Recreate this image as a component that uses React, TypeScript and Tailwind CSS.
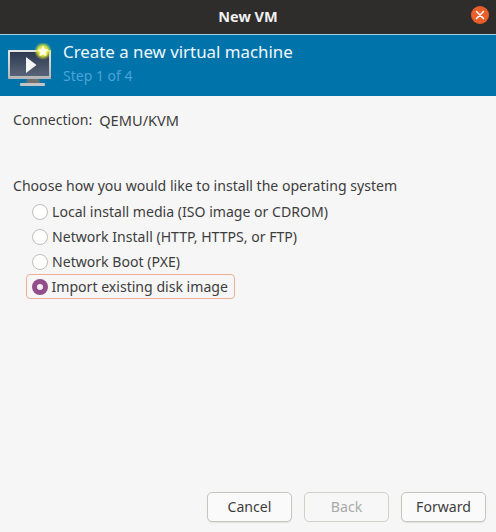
import React from "react";

function VmIcon() {
  return (
    <svg width="46" height="46" viewBox="0 0 46 46" className="shrink-0">
      <defs>
        <radialGradient id="glow">
          <stop offset="0" stopColor="#fffbb0" />
          <stop offset="0.55" stopColor="#e6ea3c" stopOpacity="0.95" />
          <stop offset="1" stopColor="#c8d830" stopOpacity="0" />
        </radialGradient>
        <linearGradient id="scr" x1="0" y1="0" x2="0" y2="1">
          <stop offset="0" stopColor="#2d3a50" />
          <stop offset="1" stopColor="#5a6478" />
        </linearGradient>
        <linearGradient id="frame" x1="0" y1="0" x2="0" y2="1">
          <stop offset="0" stopColor="#e8e8e8" />
          <stop offset="1" stopColor="#b4b4b4" />
        </linearGradient>
      </defs>
      <rect x="1" y="7" width="43" height="29" rx="1" fill="url(#frame)" />
      <rect x="3" y="9" width="39" height="24" fill="url(#scr)" />
      <path d="M19 40 L20 36 H32 L33 40 Z" fill="#6f6f6f" />
      <rect x="13" y="40" width="25" height="3" rx="1" fill="#c4c4c4" />
      <path d="M19 14 L29.5 22 L19 30 Z" fill="#f5f5f5" />
      <circle cx="36" cy="8" r="9" fill="url(#glow)" />
      <path d="M36 2.5 L37.7 6.2 L41.5 6.6 L38.7 9.3 L39.5 13.3 L36 11.3 L32.5 13.3 L33.3 9.3 L30.5 6.6 L34.3 6.2 Z" fill="#fffde8" />
    </svg>
  );
}

function Radio({ label, checked }: { label: string; checked?: boolean }) {
  return (
    <div
      className={
        checked
          ? "h-[25px] w-[209px] -ml-[6px] pl-[4.5px] flex items-center gap-[4px] rounded-[4px] border-[1.5px] border-[#efae97]"
          : "h-[25px] ml-[-1px] pl-[1px] flex items-center gap-[4px]"
      }
    >
      {checked ? (
        <span className="w-[16px] h-[16px] rounded-full bg-[#924d8b] flex items-center justify-center shrink-0">
          <span className="w-[6px] h-[6px] rounded-full bg-[#f4eef3]" />
        </span>
      ) : (
        <span className="w-[16px] h-[16px] rounded-full border border-[#c2bfbb] bg-white shrink-0" />
      )}
      <span className="whitespace-nowrap">{label}</span>
    </div>
  );
}

function Btn({ label, disabled }: { label: string; disabled?: boolean }) {
  return (
    <div
      className={
        disabled
          ? "w-[85px] h-[30px] rounded-[5px] border border-[#d3d0cc] bg-[#f7f7f7] text-[#a9a9a9] flex items-center justify-center"
          : "w-[85px] h-[30px] rounded-[5px] border border-[#c8c5c1] bg-[#fafafa] shadow-[0_1px_1px_rgba(0,0,0,0.08)] text-[#3d3d3d] flex items-center justify-center"
      }
    >
      {label}
    </div>
  );
}

export default function App() {
  return (
    <div className="w-[496px] h-[532px] flex flex-col bg-[#f6f6f6] text-[#3d3d3d] text-[14.08px] font-['Noto_Sans','Open_Sans',sans-serif] overflow-hidden">
      <div className="h-[34px] shrink-0 bg-[#2f2d2c] flex items-center justify-center relative">
        <span className="text-[#f0f0f0] font-bold text-[14.5px]">New VM</span>
        <span className="absolute left-[471px] top-[6px] w-[18px] h-[18px] rounded-full bg-[#e95f2b] flex items-center justify-center">
          <svg width="10" height="10" viewBox="0 0 10 10">
            <path d="M1.5 1.5 L8.5 8.5 M8.5 1.5 L1.5 8.5" stroke="#fff" strokeWidth="1.5" strokeLinecap="round" />
          </svg>
        </span>
      </div>
      <div className="h-[62px] shrink-0 bg-[#0073ab] border-t border-[#a9d3e6] flex items-center pl-[7px] gap-[10px]">
        <VmIcon />
        <div className="flex flex-col -mt-[4px]">
          <span className="text-[#f0f8fc] text-[16.85px] leading-[24px] whitespace-nowrap">Create a new virtual machine</span>
          <span className="text-[#4ba3d6] text-[14px] leading-[24px] whitespace-nowrap">Step 1 of 4</span>
        </div>
      </div>
      <div className="flex-1 flex flex-col pl-[13px] pr-[10px]">
        <div className="mt-[14px] flex gap-[7px] leading-[20px] whitespace-nowrap">
          <span>Connection:</span>
          <span className="text-[14.6px]">QEMU/KVM</span>
        </div>
        <div className="mt-[46px] leading-[20px] whitespace-nowrap">Choose how you would like to install the operating system</div>
        <div className="mt-[3px] pl-[19px] flex flex-col">
          <Radio label="Local install media (ISO image or CDROM)" />
          <Radio label="Network Install (HTTP, HTTPS, or FTP)" />
          <Radio label="Network Boot (PXE)" />
          <Radio label="Import existing disk image" checked />
        </div>
        <div className="mt-auto mb-[10px] flex justify-end gap-[12px]">
          <Btn label="Cancel" />
          <Btn label="Back" disabled />
          <Btn label="Forward" />
        </div>
      </div>
    </div>
  );
}
